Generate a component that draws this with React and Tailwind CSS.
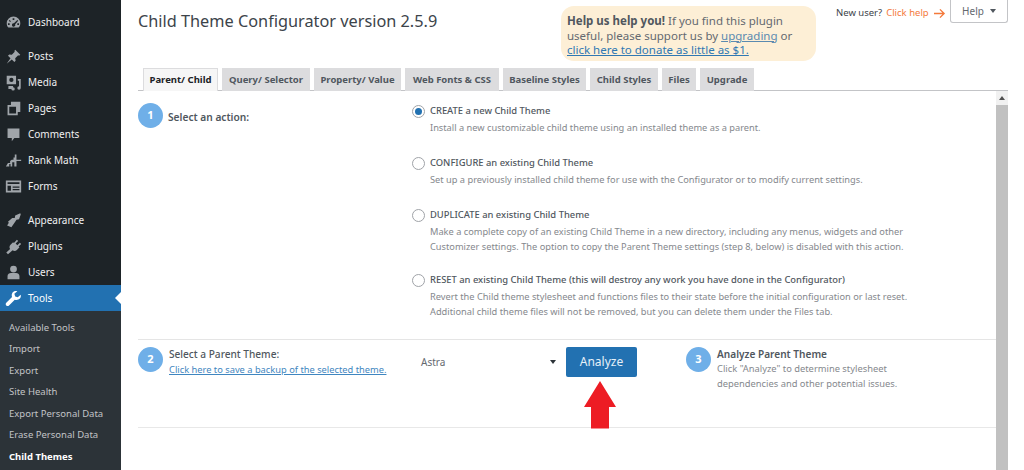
const font = { fontFamily: '"Noto Sans", "Open Sans", sans-serif' };

function Icon({ children }) {
  return (
    <svg viewBox="0 0 20 20" className="h-[17px] w-[17px] shrink-0" fill="currentColor">
      {children}
    </svg>
  );
}

const icons = {
  dashboard: (
    <path fillRule="evenodd" d="M10 3a8 8 0 0 0-8 8c0 2 .7 3.800 2 5h12c1.300-1.200 2-3 2-5a8 8 0 0 0-8-8zM9 5h2v2H9zM5.500 7l1.500 1.500-1 1L4.500 8zM14.500 7l1 1-3.500 4.200a2 2 0 1 1-1.500-1.200zM3.500 11h2v2h-2zM14.500 11h2v2h-2z" />
  ),
  posts: <path d="M12 2l6 6-1.500 1-1-.5-3.500 3.500.5 3-1.500 1.500-3-3L2 18.500l4.500-6.500-3-3L5 7.500l3 .5L11.500 4.500 11 3.500z" />,
  media: (
    <path fillRule="evenodd" d="M2 2h11v10H2zM7.500 4.500a2.500 2.500 0 1 0 0 5 2.500 2.500 0 0 0 0-5zM15 6h3.500v10.500a2 2 0 1 1-2-2V8H15zM4 14h5.500v1.500a2 2 0 1 1-2 2H4z" />
  ),
  pages: <path fillRule="evenodd" d="M7 2h11v12h-3v4H3V6h4zM5 8v8h8V8z" />,
  comments: <path d="M3 3h14v11h-6l-3 4v-4H3z" />,
  rank: <path d="M1 17l2.500-4H6v-2.500L8 9h2V6.500h1.500V3h2v6H19v1.500h-5.500V17h-2.500v-5H8.500v5H6.500v-3H5v3z" />,
  forms: (
    <path fillRule="evenodd" d="M1 3h18v14H1zM3 5v2h14V5zM3 9v6h4V9zM9 10v1.500h8V10zM9 13v1.500h8V13z" />
  ),
  appearance: <path d="M12 4l6-2.500.5 1.500-2 5.500-3 .5-1.500 2.500-4.500 6.500-5-2 2-3.500-1-1 5-4.500L11.500 7z" />,
  plugins: <path d="M14 2l1.500 1.500-3 3 2 2 3-3L19 7l-3 3 1 1-3 3c-1.500 1.500-3.500 1.500-5 .5L3.500 19 1.500 17 6 13c-1-1.500-1-3.500.5-5l3-3 1 1z" />,
  users: (
    <>
      <circle cx="10" cy="6" r="4" />
      <path d="M3 18v-4c0-2 2-3.500 4-3.500h6c2 0 4 1.500 4 3.500v4z" />
    </>
  ),
  tools: <path d="M18.500 5.500l-3.500 3-3-1-1-3 3.500-3C11 .5 7.500 3 8 7c0 .5.200 1 .3 1.300L1.500 15c-1 1-.8 2.300 0 3.200.9.900 2.300 1 3.200 0l6.800-6.800C16 12.500 19.500 9.500 18.500 5.500z" />,
};

const menuTop = [{ key: "dashboard", label: "Dashboard" }];
const menuMid = [
  { key: "posts", label: "Posts" },
  { key: "media", label: "Media" },
  { key: "pages", label: "Pages" },
  { key: "comments", label: "Comments" },
  { key: "rank", label: "Rank Math" },
  { key: "forms", label: "Forms" },
];
const menuLow = [
  { key: "appearance", label: "Appearance" },
  { key: "plugins", label: "Plugins" },
  { key: "users", label: "Users" },
];
const subMenu = ["Available Tools", "Import", "Export", "Site Health", "Export Personal Data", "Erase Personal Data"];

const tabs = [
  { label: "Parent/ Child", w: "w-[75px]", active: true },
  { label: "Query/ Selector", w: "w-[88px]" },
  { label: "Property/ Value", w: "w-[87px]" },
  { label: "Web Fonts & CSS", w: "w-[94px]" },
  { label: "Baseline Styles", w: "w-[83px]" },
  { label: "Child Styles", w: "w-[68px]" },
  { label: "Files", w: "w-[34px]" },
  { label: "Upgrade", w: "w-[54px]" },
];

const actions = [
  {
    title: "CREATE a new Child Theme",
    lines: ["Install a new customizable child theme using an installed theme as a parent."],
    checked: true,
    box: "h-[52px]",
  },
  {
    title: "CONFIGURE an existing Child Theme",
    lines: ["Set up a previously installed child theme for use with the Configurator or to modify current settings."],
    box: "h-[52px]",
  },
  {
    title: "DUPLICATE an existing Child Theme",
    lines: [
      "Make a complete copy of an existing Child Theme in a new directory, including any menus, widgets and other",
      "Customizer settings. The option to copy the Parent Theme settings (step 8, below) is disabled with this action.",
    ],
    box: "h-[65px]",
  },
  {
    title: "RESET an existing Child Theme (this will destroy any work you have done in the Configurator)",
    lines: [
      "Revert the Child theme stylesheet and functions files to their state before the initial configuration or last reset.",
      "Additional child theme files will not be removed, but you can delete them under the Files tab.",
    ],
    box: "h-[60px]",
  },
];

function MenuItem({ item }) {
  return (
    <div className="flex h-[26px] items-center gap-[6px] pl-[5px] text-[#f0f0f1]">
      <span className="text-[#a0a5aa]">
        <Icon>{icons[item.key]}</Icon>
      </span>
      <span className="text-[10px]">{item.label}</span>
    </div>
  );
}

function Step({ n }) {
  return (
    <div className="flex h-[25px] w-[25px] shrink-0 items-center justify-center rounded-full bg-[#6fafe8] text-[11px] font-bold text-white">
      {n}
    </div>
  );
}

function Radio({ checked }) {
  return (
    <div className="mt-[2px] flex h-[13px] w-[13px] shrink-0 items-center justify-center rounded-full border border-[#a0a3a8] bg-white">
      {checked && <div className="h-[7px] w-[7px] rounded-full bg-[#2271b1]" />}
    </div>
  );
}

export default function App() {
  return (
    <div className="flex h-[470px] w-[1024px] overflow-hidden bg-white text-[#3c434a]" style={font}>
      {/* SIDEBAR */}
      <aside className="flex w-[121px] shrink-0 flex-col bg-[#1d2327] pt-[9px]">
        {menuTop.map((m) => (
          <MenuItem key={m.key} item={m} />
        ))}
        <div className="h-[8px]" />
        {menuMid.map((m) => (
          <MenuItem key={m.key} item={m} />
        ))}
        <div className="h-[8px]" />
        {menuLow.map((m) => (
          <MenuItem key={m.key} item={m} />
        ))}
        <div className="relative flex h-[26px] items-center gap-[6px] bg-[#2271b1] pl-[5px] text-white">
          <Icon>{icons.tools}</Icon>
          <span className="text-[10px]">Tools</span>
          <div className="absolute right-0 top-[7px] h-0 w-0 border-y-[6px] border-r-[6px] border-y-transparent border-r-white" />
        </div>
        <div className="flex flex-1 flex-col bg-[#2c3338] pl-[9px] pt-[6px]">
          {subMenu.map((s) => (
            <div key={s} className="flex h-[21.500px] items-center text-[9.500px] text-[#c3c4c7]">
              {s}
            </div>
          ))}
          <div className="flex h-[21.500px] items-center text-[9.500px] font-bold text-white">Child Themes</div>
        </div>
      </aside>

      {/* MAIN */}
      <main className="flex min-w-0 flex-1 flex-col pl-[17px] pr-[16px]">
        {/* header */}
        <div className="flex h-[68px] shrink-0 items-start">
          <h1 className="mt-[7px] w-[423px] shrink-0 text-[16.300px] leading-[28px] text-[#3c434a]">
            Child Theme Configurator version 2.5.9
          </h1>
          <div className="mt-[6px] h-[55px] w-[255px] shrink-0 rounded-[13px] bg-[#fdefd6] px-[6px] pt-[8px] text-[11.500px] leading-[14.500px] text-[#646970]">
            <b className="text-[#50575e]">Help us help you!</b> If you find this plugin useful, please support us by{" "}
            <span className="text-[#5a8ab0] underline">upgrading</span> or{" "}
            <span className="text-[#2f78b3] underline">click here to donate as little as $1.</span>
          </div>
          <div className="ml-[20px] mt-[6px] flex items-center gap-[4px] text-[9.500px]">
            <span className="text-[#3c434a]">New user?</span>
            <span className="text-[#f4793b]">Click help</span>
            <svg viewBox="0 0 14 12" className="h-[11px] w-[13px]" fill="none" stroke="#f4793b" strokeWidth="1.500">
              <path d="M1 6h11M7.500 1.500L12 6l-4.500 4.500" />
            </svg>
          </div>
          <div className="ml-auto flex h-[23px] w-[58px] items-center justify-center gap-[6px] rounded-b-[3px] border border-t-0 border-[#c3c4c7] text-[10px] text-[#646970]">
            Help
            <span className="h-0 w-0 border-x-[3.500px] border-t-[4px] border-x-transparent border-t-[#50575e]" />
          </div>
        </div>

        {/* tabs */}
        <div className="flex h-[23px] shrink-0 gap-[4px] border-b border-[#c3c4c7] pl-[5px]">
          {tabs.map((t) => (
            <div
              key={t.label}
              className={`flex h-[23px] items-center justify-center whitespace-nowrap border border-b-0 border-[#dcdcde] pt-[1px] text-[9.500px] font-bold ${t.w} ${
                t.active ? "bg-[#f6f6f6] text-[#1d2327]" : "bg-[#dcdcde] text-[#50575e]"
              }`}
            >
              {t.label}
            </div>
          ))}
        </div>

        {/* panel */}
        <div className="flex min-h-0 flex-1">
          <div className="min-w-0 flex-1">
            <div className="flex h-[249px] border-b border-[#e5e5e5] pt-[12px]">
              <div className="flex w-[274px] shrink-0 items-start gap-[5px]">
                <Step n="1" />
                <div className="mt-[7px] text-[10.200px] font-semibold text-[#50575e]">Select an action:</div>
              </div>
              <div className="flex flex-col">
                {actions.map((a) => (
                  <div key={a.title} className={`flex gap-[5px] ${a.box}`}>
                    <Radio checked={a.checked} />
                    <div className="leading-[15px]">
                      <div className="whitespace-nowrap text-[9.400px] font-medium text-[#50575e]">{a.title}</div>
                      <div className="mt-[2px] text-[9.250px] text-[#85888d]">
                        {a.lines.map((l) => (
                          <div key={l} className="whitespace-nowrap">
                            {l}
                          </div>
                        ))}
                      </div>
                    </div>
                  </div>
                ))}
              </div>
            </div>

            <div className="relative flex h-[88px] items-start border-b border-[#e8e8e8] pt-[7px]">
              <div className="flex w-[283px] shrink-0 gap-[6px]">
                <Step n="2" />
                <div className="-mt-[1px] leading-[16px]">
                  <div className="text-[10.100px] font-medium text-[#50575e]">Select a Parent Theme:</div>
                  <div className="whitespace-nowrap text-[9.300px] text-[#3f86c0] underline">
                    Click here to save a backup of the selected theme.
                  </div>
                </div>
              </div>
              <div className="flex h-[30px] w-[145px] shrink-0 items-center justify-between pr-[10px] text-[10px] text-[#646970]">
                Astra
                <span className="h-0 w-0 border-x-[3.500px] border-t-[4px] border-x-transparent border-t-[#2c3338]" />
              </div>
              <div className="flex h-[30px] w-[71px] shrink-0 items-center justify-center rounded-[2px] bg-[#2271b1] text-[12px] text-[#e6f0f8]">
                Analyze
              </div>
              <div className="ml-[49px] flex gap-[6px]">
                <Step n="3" />
                <div className="-mt-[1px] text-[9.350px] leading-[14.500px] text-[#85888d]">
                  <div className="text-[10.100px] font-semibold leading-[16px] text-[#50575e]">Analyze Parent Theme</div>
                  <div>Click "Analyze" to determine stylesheet</div>
                  <div>dependencies and other potential issues.</div>
                </div>
              </div>
              {/* red arrow annotation */}
              <svg viewBox="0 0 34 48" className="absolute left-[445px] top-[41px] h-[48px] w-[34px]" fill="#ed1c24">
                <path d="M17 0L33 26H26V47.500H8V26H1z" />
              </svg>
            </div>
          </div>

          {/* scrollbar */}
          <div className="flex w-[12px] shrink-0 flex-col items-center bg-[#f1f1f1]">
            <div className="flex h-[14px] items-center">
              <span className="h-0 w-0 border-x-[3px] border-b-[4px] border-x-transparent border-b-[#505050]" />
            </div>
            <div className="w-full flex-1 bg-[#c1c1c1]" />
          </div>
        </div>
      </main>
    </div>
  );
}
